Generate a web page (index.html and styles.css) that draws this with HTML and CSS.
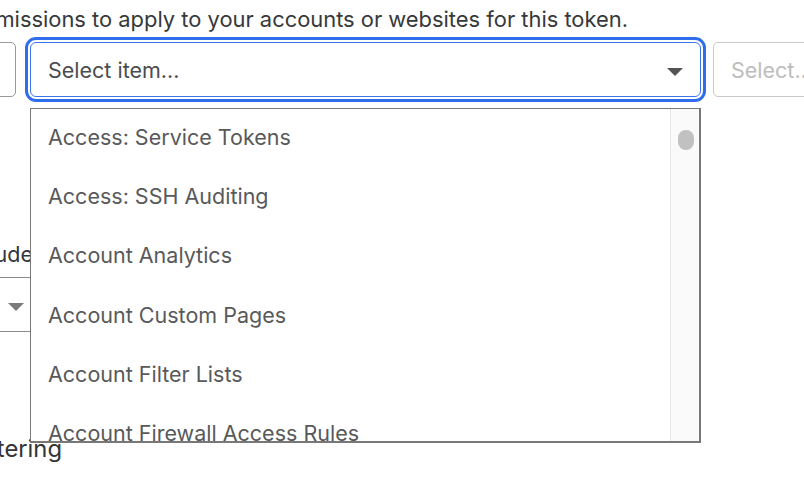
FILE: index.html
```html
<!DOCTYPE html>
<html lang="en">
<head>
<meta charset="utf-8">
<title>Permissions</title>
<link rel="stylesheet" href="styles.css">
</head>
<body>
<div class="page">
  <div class="desc-wrap"><p class="desc">Select permissions to apply to your accounts or websites for this token.</p></div>

  <div class="perm-row">
    <div class="select select-first"><span class="value">Account</span><span class="caret"></span></div>
    <div class="combo">
      <div class="select select-focus"><span class="placeholder">Select item...</span><span class="caret"></span></div>
      <div class="menu">
        <ul class="menu-list">
          <li class="menu-item">Access: Service Tokens</li>
          <li class="menu-item">Access: SSH Auditing</li>
          <li class="menu-item">Account Analytics</li>
          <li class="menu-item">Account Custom Pages</li>
          <li class="menu-item">Account Filter Lists</li>
          <li class="menu-item">Account Firewall Access Rules</li>
          <li class="menu-item">Account Rulesets</li>
        </ul>
        <div class="scrollbar"><div class="thumb"></div></div>
      </div>
    </div>
    <div class="select select-third"><span class="placeholder light">Select...</span></div>
  </div>

  <div class="resources">
    <div class="label-wrap"><span class="label">Include</span></div>
    <div class="select select-lower"><span class="value">All accounts</span><span class="caret caret-light"></span></div>
  </div>

  <div class="heading-wrap"><h3 class="heading">Client IP Address Filtering</h3></div>
</div>
</body>
</html>
```
FILE: styles.css
```css
html, body {
  margin: 0;
  padding: 0;
  background: #ffffff;
  overflow: hidden;
}

body {
  width: 804px;
  height: 478px;
  font-family: Inter, "Noto Sans", "Liberation Sans", sans-serif;
  font-size: 21.5px;
  color: #333538;
}

.page {
  position: relative;
}

.desc-wrap {
  width: 628px;
  display: flex;
  justify-content: flex-end;
  padding-top: 5px;
}

.desc {
  margin: 0;
  white-space: nowrap;
  font-size: 21.9px;
  line-height: 28px;
  color: #36393b;
}

.perm-row {
  display: flex;
  margin-top: 9px;
  margin-left: -184px;
}

.select {
  box-sizing: border-box;
  height: 55px;
  border: 1px solid #9a9a9a;
  border-radius: 5px;
  background: #fff;
  display: flex;
  align-items: center;
  padding: 0 17px;
  position: relative;
  white-space: nowrap;
}

.select-first {
  width: 200px;
  flex: none;
  margin-right: 14px;
}

.combo {
  position: relative;
  width: 671px;
  flex: none;
  margin-right: 12px;
}

.select-focus {
  width: 100%;
  border-color: #3a74ef;
  outline: 3px solid #2f6ded;
  outline-offset: 2px;
  border-radius: 6px;
}

.select-third {
  width: 200px;
  flex: none;
  border-color: #c9c9c9;
}

.placeholder {
  color: #4b4d50;
}

.placeholder.light {
  color: #bdbdbd;
}

.value {
  color: #333;
}

.caret {
  position: absolute;
  right: 17px;
  top: 25px;
  width: 0;
  height: 0;
  border-left: 8px solid transparent;
  border-right: 8px solid transparent;
  border-top: 8px solid #545454;
}

.caret-light {
  border-top-color: #7a7a7a;
}

.menu {
  position: absolute;
  top: 66px;
  left: 0;
  width: 671px;
  height: 335px;
  box-sizing: border-box;
  border: 1px solid #787878;
  border-right-width: 2px;
  border-bottom-width: 2px;
  background: #fff;
  overflow: hidden;
  z-index: 5;
}

.menu-list {
  list-style: none;
  margin: -2px 0 0;
  padding: 0;
}

.menu-item {
  height: 59.3px;
  display: flex;
  align-items: center;
  padding: 0 17px;
  color: #58595b;
  white-space: nowrap;
}

.scrollbar {
  position: absolute;
  top: 0;
  right: 0;
  bottom: 0;
  width: 28px;
  background: #fafafa;
  border-left: 1px solid #e6e6e6;
}

.thumb {
  position: absolute;
  top: 21px;
  left: 7px;
  width: 16px;
  height: 20px;
  border-radius: 8px;
  background: #c1c1c1;
}

.resources {
  margin-top: 143px;
  margin-left: -300px;
  width: 342px;
}

.label-wrap {
  width: 333px;
  display: flex;
  justify-content: flex-end;
}

.label {
  line-height: 28px;
  white-space: nowrap;
}

.select-lower {
  margin-top: 9px;
  width: 342px;
  border-color: #8a8a8a;
}

.heading-wrap {
  width: 62px;
  display: flex;
  justify-content: flex-end;
  margin-top: 103px;
}

.heading {
  margin: 0;
  font-size: 23.8px;
  font-weight: 400;
  line-height: 28px;
  white-space: nowrap;
  color: #333538;
}
```
